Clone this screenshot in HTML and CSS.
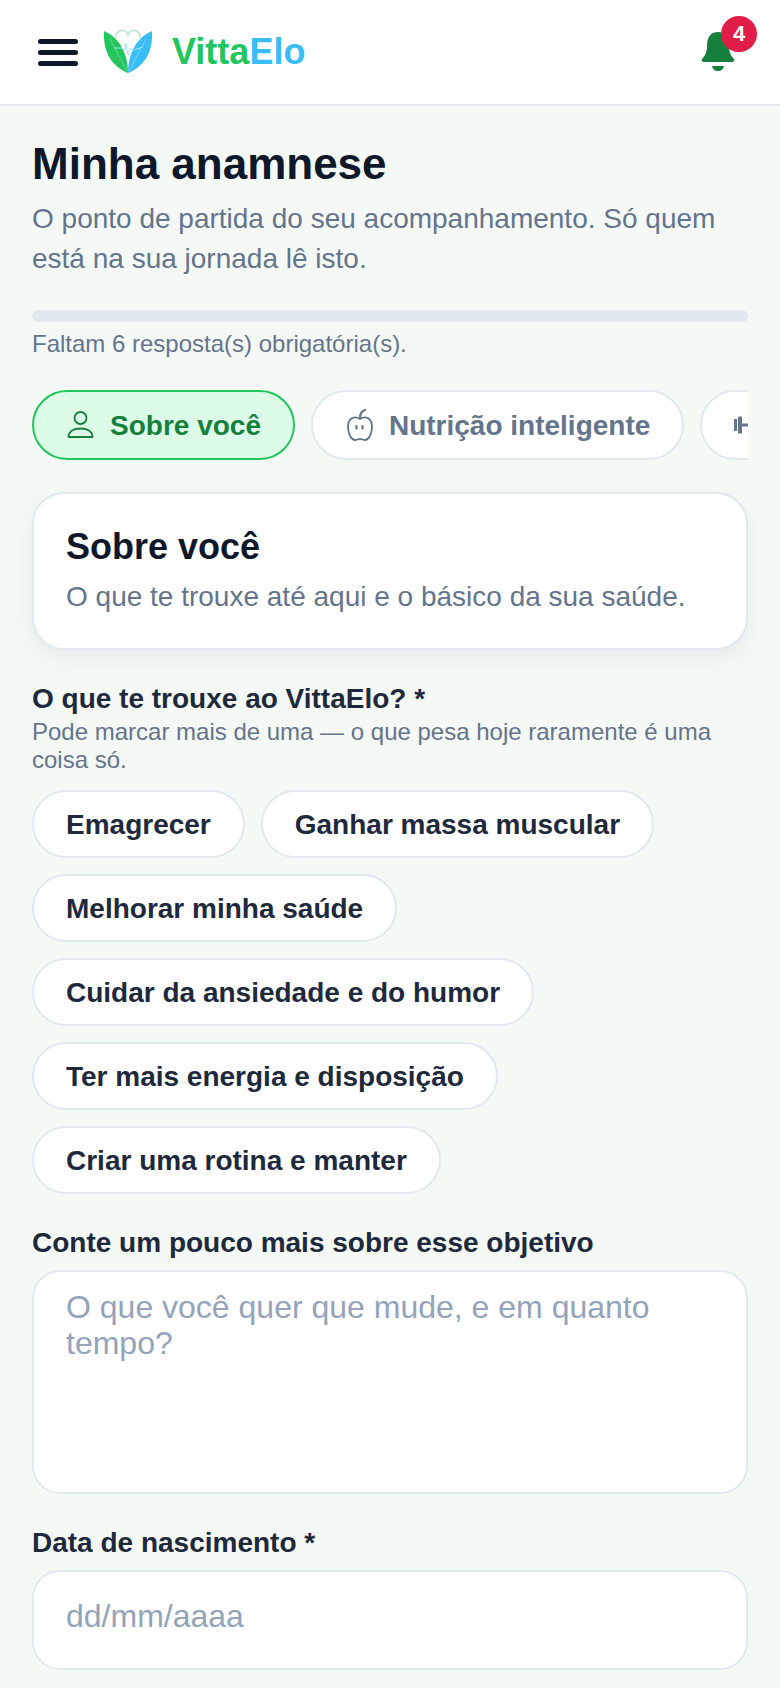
FILE: index.html
```html
<!DOCTYPE html>
<html lang="pt-BR">
<head>
<meta charset="utf-8">
<title>Minha anamnese</title>
<link rel="stylesheet" href="styles.css">
</head>
<body>
<header class="topbar">
  <div class="brand">
    <div class="burger"><span></span><span></span><span></span></div>
    <svg class="logo" viewBox="0 0 50 46" width="50" height="46">
      <path d="M12 9C14 0 22 -1 25 6C28 -1 36 0 38 9" fill="none" stroke="#b7e2c5" stroke-width="1.3"/>
      <path d="M25 44C25 30 20 10 1 2C0 20 6 36 25 44Z" fill="#22c55e"/>
      <path d="M25 44C25 30 30 10 49 2C50 20 44 36 25 44Z" fill="#38bdf8"/>
      <path d="M7 10L24 42M43 10L26 42" stroke="#d8f3e2" stroke-width=".6" fill="none" opacity=".7"/>
      <path d="M11 19H19L21 22L23 14L25 26L27 19L29 21H31L40 18" fill="none" stroke="#a5e3fb" stroke-width="1"/>
    </svg>
    <div class="wordmark"><span class="w-green">Vitta</span><span class="w-blue">Elo</span></div>
  </div>
  <div class="bell">
    <svg viewBox="0 0 34 40" width="34" height="40">
      <path d="M17 0C9 0 6 6 6 14C6 20 4 24 1 27C0 29 1 30 3 30H31C33 30 34 29 33 27C30 24 28 20 28 14C28 6 25 0 17 0Z" fill="#15803d"/>
      <path d="M11 34H23C22 38 20 39 17 39C14 39 12 38 11 34Z" fill="#15803d"/>
    </svg>
    <span class="badge">4</span>
  </div>
</header>
<main class="page">
  <h1 class="title">Minha anamnese</h1>
  <p class="lead">O ponto de partida do seu acompanhamento. Só quem está na sua jornada lê isto.</p>
  <div class="progress"></div>
  <p class="progress-text">Faltam 6 resposta(s) obrigatória(s).</p>
  <nav class="tabs">
    <div class="tab tab-active">
      <svg viewBox="0 0 32 32" width="32" height="32" fill="none" stroke="#15803d" stroke-width="1.8"><circle cx="14.5" cy="9" r="6"/><path d="M2.5 28C2.5 22 8 19.5 14.5 19.5C21 19.5 26.5 22 26.5 28Z" stroke-linejoin="round"/></svg>
      Sobre você
    </div>
    <div class="tab">
      <svg viewBox="0 0 32 32" width="32" height="32" fill="none" stroke="#64748b" stroke-width="1.8" stroke-linecap="round"><path d="M15 10C10 7 3 8 3 18C3 26 7 31 10 31C12 31 13 30 15 30C17 30 18 31 20 31C23 31 27 26 27 18C27 8 20 7 15 10Z"/><path d="M15 9C15 5 17 2 20 1" stroke-width="2.2"/><path d="M11.5 17V19.5M17.5 17V19.5" stroke-width="2.2"/></svg>
      Nutrição inteligente
    </div>
    <div class="tab tab-clipped">
      <svg viewBox="0 0 32 32" width="32" height="32" fill="#64748b"><rect x="0" y="10" width="3" height="12"/><rect x="4" y="7.5" width="4" height="17" rx="1"/><rect x="8" y="14.5" width="16" height="3"/><rect x="24" y="7.5" width="4" height="17" rx="1"/><rect x="29" y="10" width="3" height="12"/></svg>
    </div>
  </nav>
  <section class="card">
    <h2 class="card-title">Sobre você</h2>
    <p class="card-text">O que te trouxe até aqui e o básico da sua saúde.</p>
  </section>
  <div class="field">
    <label class="label">O que te trouxe ao VittaElo? *</label>
    <p class="hint">Pode marcar mais de uma — o que pesa hoje raramente é uma coisa só.</p>
    <div class="chips">
      <span class="chip">Emagrecer</span>
      <span class="chip">Ganhar massa muscular</span>
      <span class="chip">Melhorar minha saúde</span>
      <span class="chip">Cuidar da ansiedade e do humor</span>
      <span class="chip">Ter mais energia e disposição</span>
      <span class="chip">Criar uma rotina e manter</span>
    </div>
  </div>
  <div class="field">
    <label class="label label-gap">Conte um pouco mais sobre esse objetivo</label>
    <textarea class="input textarea" placeholder="O que você quer que mude, e em quanto tempo?"></textarea>
  </div>
  <div class="field">
    <label class="label label-gap">Data de nascimento *</label>
    <input class="input date" placeholder="dd/mm/aaaa">
  </div>
</main>
</body>
</html>
```
FILE: styles.css
```css
* { box-sizing: border-box; }
html, body { margin: 0; padding: 0; }
body {
  width: 780px;
  height: 1688px;
  overflow: hidden;
  background: #f4f9f6;
  font-family: "Liberation Sans", Arial, sans-serif;
  color: #0f172a;
}
.topbar {
  height: 106px;
  background: #fff;
  border-bottom: 2px solid #e2e8f0;
  display: flex;
  align-items: center;
  justify-content: space-between;
  padding: 0 23px 0 38px;
}
.brand { display: flex; align-items: center; }
.burger { width: 40px; display: flex; flex-direction: column; gap: 6px; margin-right: 25px; }
.burger span { height: 5px; border-radius: 3px; background: #0f172a; }
.logo { margin-right: 19px; }
.wordmark { font-size: 36px; font-weight: 700; }
.w-green { color: #22c55e; }
.w-blue { color: #38bdf8; }
.bell { position: relative; width: 70px; height: 64px; }
.bell svg { position: absolute; left: 14px; top: 12px; }
.badge {
  position: absolute;
  right: 0;
  top: -4px;
  width: 36px;
  height: 36px;
  border-radius: 50%;
  background: #e11d48;
  color: #fff;
  font-size: 22px;
  font-weight: 700;
  display: flex;
  align-items: center;
  justify-content: center;
}
.page { padding: 31px 32px 0; }
.title { margin: 0; font-size: 44px; line-height: 54px; font-weight: 700; }
.lead { margin: 8px 0 0; font-size: 28px; line-height: 40px; color: #64748b; }
.progress { margin-top: 31px; height: 12px; border-radius: 6px; background: #e2e8f0; }
.progress-text { margin: 6px 0 0; font-size: 24px; line-height: 31px; color: #64748b; }
.tabs { margin-top: 31px; display: flex; gap: 16px; overflow: hidden; }
.tab {
  flex: none;
  height: 70px;
  padding: 2px 32px 0;
  display: flex;
  align-items: center;
  gap: 12px;
  border: 2px solid #e2e8f0;
  border-radius: 35px;
  background: #fff;
  font-size: 28px;
  font-weight: 700;
  color: #64748b;
}
.tab svg { margin-top: -2px; }
.tab-active { background: #dcfce7; border-color: #22c55e; color: #15803d; }
.tab-clipped { min-width: 200px; }
.card {
  margin-top: 32px;
  height: 158px;
  padding: 31px 32px;
  background: #fff;
  border: 2px solid #e2e8f0;
  border-radius: 32px;
  box-shadow: 0 8px 24px rgba(15, 23, 42, 0.06);
}
.card-title { margin: 0; font-size: 36px; line-height: 44px; font-weight: 700; }
.card-text { margin: 8px 0 0; font-size: 28px; line-height: 40px; color: #64748b; }
.field { margin-top: 31px; }
.label { display: block; font-size: 28px; line-height: 36px; font-weight: 700; color: #1e293b; }
.label-gap { margin-bottom: 9px; }
.hint { margin: 1px 0 16px; font-size: 24px; line-height: 28px; color: #64748b; }
.chips { display: flex; flex-wrap: wrap; gap: 16px; }
.chip {
  height: 68px;
  padding: 2px 32px 0;
  display: flex;
  align-items: center;
  border: 2px solid #e2e8f0;
  border-radius: 34px;
  background: #fff;
  font-size: 28px;
  font-weight: 700;
  color: #1e293b;
}
.input {
  display: block;
  width: 100%;
  background: #fff;
  border: 2px solid #e2e8f0;
  border-radius: 28px;
  font-family: "Liberation Sans", Arial, sans-serif;
  font-size: 32px;
  line-height: 36px;
  color: #0f172a;
  outline: none;
  padding: 17px 32px;
  resize: none;
}
.input::placeholder { color: #94a3b8; opacity: 1; }
.textarea { height: 224px; }
.date { height: 100px; padding: 0 32px 7px; }
```
